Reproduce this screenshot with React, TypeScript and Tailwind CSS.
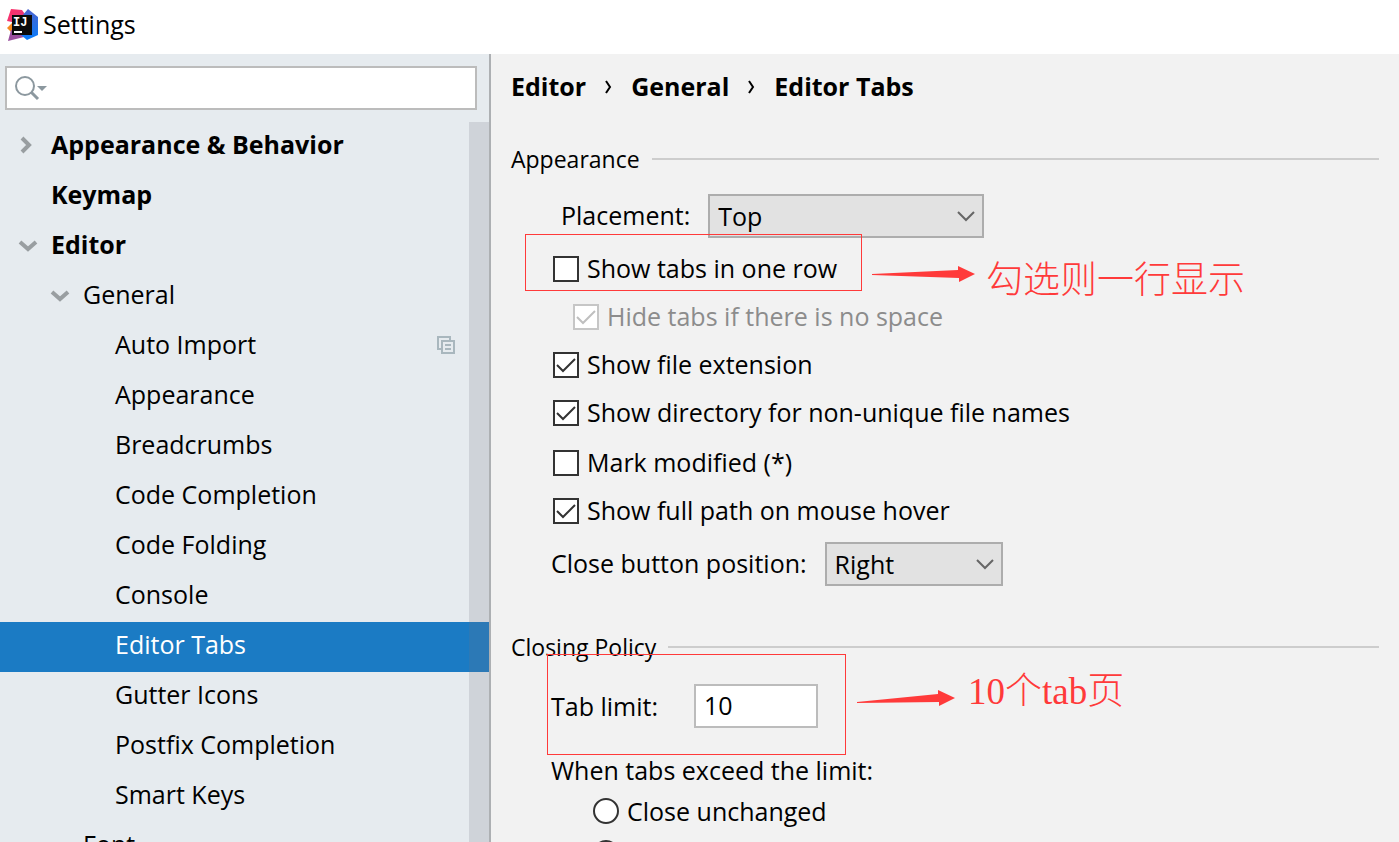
import { useState, type ReactNode } from "react";

interface TreeItem {
  label: string;
  level: 0 | 1 | 2;
  bold?: boolean;
  arrow?: "right" | "down";
  projectLevel?: boolean;
}

const TREE: TreeItem[] = [
  { label: "Appearance & Behavior", level: 0, bold: true, arrow: "right" },
  { label: "Keymap", level: 0, bold: true },
  { label: "Editor", level: 0, bold: true, arrow: "down" },
  { label: "General", level: 1, arrow: "down" },
  { label: "Auto Import", level: 2, projectLevel: true },
  { label: "Appearance", level: 2 },
  { label: "Breadcrumbs", level: 2 },
  { label: "Code Completion", level: 2 },
  { label: "Code Folding", level: 2 },
  { label: "Console", level: 2 },
  { label: "Editor Tabs", level: 2 },
  { label: "Gutter Icons", level: 2 },
  { label: "Postfix Completion", level: 2 },
  { label: "Smart Keys", level: 2 },
  { label: "Font", level: 1 },
];

const INDENT = ["pl-4", "pl-12", "pl-20"];
const NOTE_TEXT =
  "font-['Liberation_Serif','Noto_Sans_CJK_SC',serif] text-[37px] leading-9 font-light whitespace-nowrap text-[#ff3a3a]";

/* ─── Icons ─── */
function Logo() {
  return (
    <svg width="32" height="34" viewBox="0 0 32 34" aria-hidden="true">
      <defs>
        <linearGradient id="logo-pink" x1="0" y1="0" x2="1" y2="1">
          <stop offset="0" stopColor="#ff2d63" />
          <stop offset="1" stopColor="#d8408f" />
        </linearGradient>
        <linearGradient id="logo-blue" x1="0" y1="0" x2="0" y2="1">
          <stop offset="0" stopColor="#4b63cf" />
          <stop offset="1" stopColor="#087cfa" />
        </linearGradient>
      </defs>
      <path d="M0 20L5 15L12 27L6 26Z" fill="#f58a1f" />
      <path d="M4 22L18 26L17 29L1 33Z" fill="#9b4f9e" />
      <path d="M4 1L15 2L20 9L10 23L5 14L0 13Z" fill="url(#logo-pink)" />
      <path d="M21 1L31 9V27L20 32L14 27L15 8Z" fill="url(#logo-blue)" />
      <rect x="5" y="7" width="20" height="20" fill="#0b0b0b" />
      <rect x="7" y="23" width="8" height="2" fill="#fff" />
      <text
        x="6"
        y="18"
        fill="#fff"
        className="font-['Liberation_Mono',monospace] text-[12px] font-bold"
      >
        IJ
      </text>
    </svg>
  );
}

function SearchIcon() {
  return (
    <svg width="34" height="26" viewBox="0 0 34 26" fill="none" aria-hidden="true">
      <circle cx="10" cy="11" r="9" stroke="#8c989f" strokeWidth="2" />
      <path d="M16 17L23 24" stroke="#8c989f" strokeWidth="3" />
      <path d="M22 11H32L27 16Z" fill="#8c989f" />
    </svg>
  );
}

function TreeArrow({ direction }: { direction: "right" | "down" }) {
  return (
    <svg width="24" height="24" viewBox="0 0 24 24" fill="none" aria-hidden="true">
      <path
        d={direction === "right" ? "M6 5L13 12L6 19" : "M4 9L12 16L20 9"}
        stroke="#999ea1"
        strokeWidth="4"
      />
    </svg>
  );
}

function CrumbArrow() {
  return (
    <svg width="9" height="18" viewBox="0 0 9 18" fill="none" aria-hidden="true">
      <path d="M2 4L6 10L2 16" stroke="#000" strokeWidth="2" />
    </svg>
  );
}

function ProjectIcon() {
  return (
    <svg width="18" height="18" viewBox="0 0 18 18" fill="none" stroke="#a9b7be" strokeWidth="2" aria-label="Project level setting">
      <path d="M13 4V1H1V13H4" />
      <path d="M5 5H17V17H5Z" />
      <path d="M8 9H14M8 13H14" />
    </svg>
  );
}

/* ─── Controls ─── */
interface CheckProps {
  label: string;
  checked: boolean;
  disabled?: boolean;
  onToggle?: () => void;
}

function Check({ label, checked, disabled, onToggle }: CheckProps) {
  return (
    <label className={`flex h-12 w-fit items-center gap-2 ${disabled ? "pl-5 text-[#8c8c8c]" : ""}`}>
      <span className="grid size-[26px] place-items-center">
        <input
          type="checkbox"
          checked={checked}
          disabled={disabled}
          onChange={onToggle}
          className="col-start-1 row-start-1 size-[26px] appearance-none border-2 border-[#333] bg-white disabled:border-[#c6c6c6]"
        />
        {checked && (
          <svg
            width="22"
            height="22"
            viewBox="0 0 22 22"
            fill="none"
            className="pointer-events-none col-start-1 row-start-1"
            stroke={disabled ? "#bfbfbf" : "#333"}
            strokeWidth="2"
            aria-hidden="true"
          >
            <path d="M2 11L8 17L20 5" />
          </svg>
        )}
      </span>
      <span className="pb-[2px]">{label}</span>
    </label>
  );
}

interface DropdownProps {
  id: string;
  options: string[];
  initial: string;
  width: string;
}

function Dropdown({ id, options, initial, width }: DropdownProps) {
  return (
    <span className={`grid items-center ${width}`}>
      <select
        id={id}
        defaultValue={initial}
        className="col-start-1 row-start-1 h-11 w-full appearance-none border-2 border-[#adadad] bg-[#e2e2e2] px-2"
      >
        {options.map((o) => (
          <option key={o}>{o}</option>
        ))}
      </select>
      <svg
        width="20"
        height="12"
        viewBox="0 0 20 12"
        fill="none"
        className="pointer-events-none col-start-1 row-start-1 mr-2 justify-self-end"
        aria-hidden="true"
      >
        <path d="M2 2L10 10L18 2" stroke="#666" strokeWidth="2" />
      </svg>
    </span>
  );
}

function SectionTitle({ children }: { children: ReactNode }) {
  return (
    <div className="flex h-8 items-center gap-3">
      <h2 className="text-[23px] leading-8">{children}</h2>
      <div className="h-[2px] flex-1 bg-[#cdcdcd]" />
    </div>
  );
}

/* ─── Marked-up notes ─── */
function NoteArrow({ rise }: { rise?: boolean }) {
  return rise ? (
    <svg width="100" height="18" viewBox="0 0 100 18" fill="#ff3a3a" aria-hidden="true">
      <path d="M0 13L81 5V1L98 9L82 17V13L0 14Z" />
    </svg>
  ) : (
    <svg width="104" height="18" viewBox="0 0 104 18" fill="#ff3a3a" aria-hidden="true">
      <path d="M0 9L86 5V1L103 9L87 17V13L0 10Z" />
    </svg>
  );
}

/* ─── Sidebar ─── */
function Sidebar() {
  const [selected, setSelected] = useState("Editor Tabs");
  return (
    <aside className="flex w-[491px] shrink-0 flex-col overflow-hidden border-r-2 border-[#adb0b3] bg-[#e6ebef]">
      <div className="py-3 pr-3 pl-[5px]">
        <label className="flex h-11 items-center border-2 border-[#bcbcbc] bg-white pl-2">
          <SearchIcon />
          <input aria-label="Search settings" className="min-w-0 flex-1 px-2 outline-none" />
        </label>
      </div>
      <nav className="relative flex-1 overflow-hidden">
        <ul>
          {TREE.map((item) => {
            const active = item.level === 2 && item.label === selected;
            return (
              <li key={`${item.level}-${item.label}`}>
                <button
                  onClick={() => setSelected(item.label)}
                  className={`flex h-[50px] w-full items-center pb-1 text-left ${INDENT[item.level]} ${
                    item.bold ? "font-bold" : ""
                  } ${active ? "bg-[#1b7bc4] text-white" : ""}`}
                >
                  <span className="mr-[11px] w-6">
                    {item.arrow && <TreeArrow direction={item.arrow} />}
                  </span>
                  <span className="flex-1 pb-[2px]">{item.label}</span>
                  {item.projectLevel && (
                    <span className="mr-[34px]">
                      <ProjectIcon />
                    </span>
                  )}
                </button>
              </li>
            );
          })}
        </ul>
        {/* Scrollbar thumb lies over the rows */}
        <div className="absolute inset-y-0 right-0 w-5 bg-[#737580]/20" />
      </nav>
    </aside>
  );
}

/* ─── Settings page ─── */
function EditorTabsPage() {
  const [oneRow, setOneRow] = useState(false);
  const [extension, setExtension] = useState(true);
  const [directory, setDirectory] = useState(true);
  const [modified, setModified] = useState(false);
  const [fullPath, setFullPath] = useState(true);

  return (
    <main className="min-w-0 flex-1 overflow-hidden bg-[#f2f2f2] px-5 pt-4">
      <h1 className="flex h-8 items-center gap-[18px] font-bold">
        <span>Editor</span>
        <CrumbArrow />
        <span>General</span>
        <CrumbArrow />
        <span>Editor Tabs</span>
      </h1>

      <section className="pt-[41px]">
        <SectionTitle>Appearance</SectionTitle>
        <div className="flex items-center gap-[18px] pt-[19px] pl-[50px]">
          <label htmlFor="placement" className="pb-[2px]">
            Placement:
          </label>
          <Dropdown id="placement" options={["Top", "Bottom", "Left", "Right", "None"]} initial="Top" width="w-[276px]" />
        </div>

        <div className="pt-[7px] pl-[42px]">
          <div className="relative">
            <Check label="Show tabs in one row" checked={oneRow} onToggle={() => setOneRow(!oneRow)} />
            <div className="pointer-events-none absolute -top-[11px] -left-7 flex items-start gap-[10px]">
              <div className="h-[57px] w-[337px] border border-[#ff3a3a]" />
              <div className="pt-[31px]">
                <NoteArrow />
              </div>
              <span className={`pt-[29px] ${NOTE_TEXT}`}>勾选则一行显示</span>
            </div>
          </div>
          <Check label="Hide tabs if there is no space" checked disabled />
          <Check label="Show file extension" checked={extension} onToggle={() => setExtension(!extension)} />
          <Check
            label="Show directory for non-unique file names"
            checked={directory}
            onToggle={() => setDirectory(!directory)}
          />
          <div className="pt-[2px]">
            <Check label="Mark modified (*)" checked={modified} onToggle={() => setModified(!modified)} />
            <Check label="Show full path on mouse hover" checked={fullPath} onToggle={() => setFullPath(!fullPath)} />
          </div>
        </div>

        <div className="flex items-center gap-[18px] pt-[7px] pl-10">
          <label htmlFor="close-position" className="pb-[2px]">
            Close button position:
          </label>
          <Dropdown id="close-position" options={["Left", "Right", "None"]} initial="Right" width="w-[178px]" />
        </div>
      </section>

      <section className="pt-[45px]">
        <SectionTitle>Closing Policy</SectionTitle>
        <div className="pt-[21px] pl-10">
          <div className="relative flex items-center gap-9">
            <label htmlFor="tab-limit">Tab limit:</label>
            <input
              id="tab-limit"
              defaultValue="10"
              className="h-11 w-[124px] border-2 border-[#bcbcbc] bg-white px-2 pb-[2px]"
            />
            <div className="pointer-events-none absolute -top-[30px] -left-1 flex items-start gap-[11px]">
              <div className="h-[101px] w-[299px] border border-[#ff3a3a]" />
              <div className="pt-[35px]">
                <NoteArrow rise />
              </div>
              <span className={`pt-5 ${NOTE_TEXT}`}>10个tab页</span>
            </div>
          </div>

          <fieldset className="pt-[26px]">
            <legend className="contents">When tabs exceed the limit:</legend>
            <div className="pt-1 pl-[42px]">
              <label className="flex h-[42px] w-fit items-center gap-2">
                <input
                  type="radio"
                  name="exceed"
                  className="size-[26px] appearance-none rounded-full border-2 border-[#333] bg-white"
                />
                Close unchanged
              </label>
              <label className="flex h-[42px] w-fit items-center gap-2">
                <input
                  type="radio"
                  name="exceed"
                  className="size-[26px] appearance-none rounded-full border-2 border-[#333] bg-white"
                />
                Close less frequently used
              </label>
            </div>
          </fieldset>
        </div>
      </section>
    </main>
  );
}

export default function App() {
  return (
    <div className="flex h-screen flex-col overflow-hidden bg-white font-['Open_Sans','Noto_Sans_CJK_SC',sans-serif] text-[25px] leading-8 text-black">
      <header className="flex h-[54px] shrink-0 items-center gap-1 pb-1 pl-[7px]">
        <Logo />
        <span className="pb-[2px]">Settings</span>
      </header>
      <div className="flex min-h-0 flex-1">
        <Sidebar />
        <EditorTabsPage />
      </div>
    </div>
  );
}
